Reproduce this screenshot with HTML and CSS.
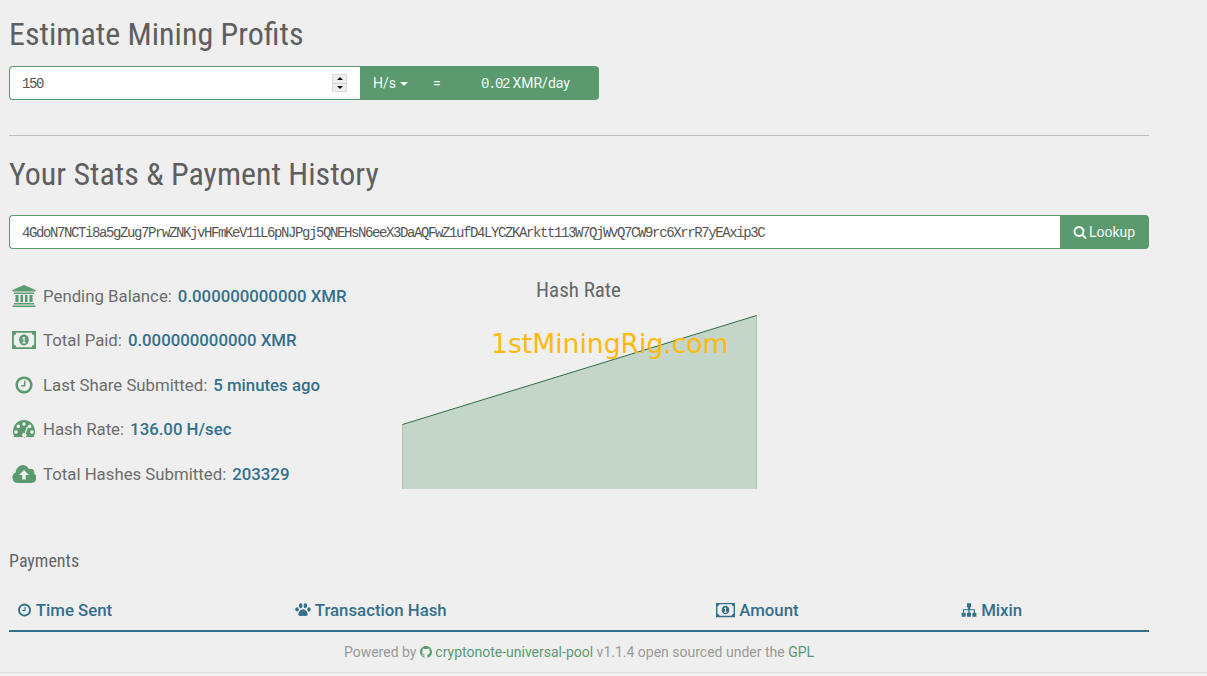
FILE: index.html
```html
<!DOCTYPE html>
<html lang="en">
<head>
<meta charset="utf-8">
<title>Estimate Mining Profits</title>
<link rel="stylesheet" href="styles.css">
</head>
<body>
<svg class="defs" width="0" height="0" aria-hidden="true">
  <symbol id="i-clock" viewBox="0 0 1792 1792"><path d="M1024 544v448q0 14-9 23t-23 9h-320q-14 0-23-9t-9-23v-64q0-14 9-23t23-9h224v-352q0-14 9-23t23-9h64q14 0 23 9t9 23zm416 352q0-148-73-273t-198-198-273-73-273 73-198 198-73 273 73 273 198 198 273 73 273-73 198-198 73-273zm224 0q0 209-103 385.5t-279.5 279.5-385.5 103-385.5-103-279.5-279.5-103-385.5 103-385.5 279.5-279.5 385.5-103 385.5 103 279.5 279.5 103 385.5z"/></symbol>
  <symbol id="i-money" viewBox="0 0 24 18"><path fill-rule="evenodd" d="M0 0h24v18H0zM1.800 4.200v9.600a3 3 0 0 1 2.600 2.400h15.200a3 3 0 0 1 2.600-2.400V4.200a3 3 0 0 1-2.600-2.400H4.400a3 3 0 0 1-2.600 2.400zM12 3.600c2.700 0 4.800 2.400 4.800 5.400s-2.100 5.400-4.800 5.400-4.800-2.400-4.800-5.400 2.100-5.400 4.800-5.400zM10.200 12.400h3.600v-1.200h-1.100V5.800h-1.100l-1.500 1.300.7.9.6-.5v3.700h-1.200z"/></symbol>
</svg>

<main class="page">
  <h2 class="title title-first">Estimate Mining Profits</h2>
  <div class="calc">
    <input class="field mono" type="number" value="150" aria-label="Hash rate">
    <span class="spin" aria-hidden="true"><i class="spin-up"></i><i class="spin-down"></i></span>
    <div class="addon calc-addon">
      <span class="unit">H/s <i class="caret"></i></span>
      <span class="equals">=</span>
      <span class="result"><span class="mono">0.02</span> XMR/day</span>
    </div>
  </div>

  <hr class="rule">

  <h2 class="title title-second">Your Stats &amp; Payment History</h2>
  <div class="lookup">
    <input class="field mono" type="text" value="4GdoN7NCTi8a5gZug7PrwZNKjvHFmKeV11L6pNJPgj5QNEHsN6eeX3DaAQFwZ1ufD4LYCZKArktt113W7QjWvQ7CW9rc6XrrR7yEAxip3C" aria-label="Address">
    <button class="addon lookup-btn" type="button">
      <svg class="btn-icon" viewBox="0 0 1792 1792"><path d="M1216 832q0-185-131.500-316.500t-316.500-131.500-316.500 131.500-131.500 316.500 131.500 316.500 316.500 131.500 316.500-131.500 131.500-316.500zm512 832q0 52-38 90t-90 38q-54 0-90-38l-343-342q-179 124-399 124-143 0-273.500-55.500t-225-150-150-225-55.500-273.500 55.500-273.500 150-225 225-150 273.500-55.500 273.500 55.500 225 150 150 225 55.500 273.500q0 220-124 399l343 343q37 37 37 90z"/></svg>
      Lookup
    </button>
  </div>

  <section class="stats-row">
    <ul class="stats">
      <li class="stat">
        <svg class="stat-icon" viewBox="0 0 24 24"><path d="M12 1 23.500 6v1.500H.5V6zM2 8.500h20V10H2zM3.500 11h3v7h-3zM8.500 11h2.500v7H8.500zM13 11h2.500v7H13zM17.500 11h3v7h-3zM2 19h20v1.500H2zM.5 21.500h23V23H.5z"/></svg>
        <span class="label">Pending Balance:</span><strong class="value">0.000000000000 XMR</strong>
      </li>
      <li class="stat">
        <svg class="stat-icon"><use href="#i-money"/></svg>
        <span class="label">Total Paid:</span><strong class="value">0.000000000000 XMR</strong>
      </li>
      <li class="stat">
        <svg class="stat-icon stat-icon-small"><use href="#i-clock"/></svg>
        <span class="label">Last Share Submitted:</span><strong class="value">5 minutes ago</strong>
      </li>
      <li class="stat">
        <svg class="stat-icon" viewBox="0 0 24 24"><path fill-rule="evenodd" d="M12 3C5.400 3 1 8.400 1 14.500c0 2 .5 3.800 1.300 5.500h19.400c.8-1.700 1.300-3.500 1.300-5.500C23 8.400 18.600 3 12 3zM12 5.200a1.800 1.800 0 1 1 0 3.600 1.800 1.800 0 0 1 0-3.600zM6.300 7.600a1.800 1.800 0 1 1 0 3.600 1.800 1.800 0 0 1 0-3.600zM17.700 7.600a1.800 1.800 0 1 1 0 3.600 1.800 1.800 0 0 1 0-3.600zM4 13.300a1.800 1.800 0 1 1 0 3.600 1.800 1.800 0 0 1 0-3.600zM20 13.300a1.800 1.800 0 1 1 0 3.600 1.800 1.800 0 0 1 0-3.600zM15 9.500l1.200.4-2.500 6.300a2.300 2.300 0 1 1-3.500.9c.5-.8 1.500-1.300 2.300-1.100z"/></svg>
        <span class="label">Hash Rate:</span><strong class="value">136.00 H/sec</strong>
      </li>
      <li class="stat">
        <svg class="stat-icon" viewBox="0 0 24 24"><path fill-rule="evenodd" d="M6 21a5.500 5.500 0 0 1-2.300-10.500A7.500 7.500 0 0 1 10.500 3c3 0 5.400 1.700 6.500 4.200.7-.3 1.200-.4 1.800-.4 2 0 3.500 1.600 3.500 3.500 0 .5-.1 1-.3 1.400A5 5 0 0 1 19 21zM12 8l-5 5h3.200v4.500h3.600V13H17z"/></svg>
        <span class="label">Total Hashes Submitted:</span><strong class="value">203329</strong>
      </li>
    </ul>
    <figure class="chart">
      <figcaption class="chart-title">Hash Rate</figcaption>
      <svg class="chart-svg" viewBox="0 0 355 174" preserveAspectRatio="none">
        <path class="chart-area" d="M0.500 109.500 354.500 .5V174H0.500z"/>
        <path class="chart-edge" d="M0.500 109.500V174M354.500 .5V174"/>
        <path class="chart-line" d="M0.500 109.500 354.500 .5"/>
      </svg>
      <div class="watermark">1stMiningRig.com</div>
    </figure>
  </section>

  <h4 class="payments-title">Payments</h4>
  <table class="payments">
    <colgroup><col class="c1"><col class="c2"><col class="c3"><col class="c4"></colgroup>
    <thead>
      <tr>
        <th><svg class="th-icon th-icon-clock"><use href="#i-clock"/></svg> Time Sent</th>
        <th><svg class="th-icon" viewBox="0 0 24 24"><ellipse cx="8.500" cy="5.500" rx="2.700" ry="3.700"/><ellipse cx="15.500" cy="5.500" rx="2.700" ry="3.700"/><ellipse cx="3" cy="11" rx="2.500" ry="3.300"/><ellipse cx="21" cy="11" rx="2.500" ry="3.300"/><path d="M12 11c3.500 0 7 4.500 7 7.500 0 3-3 2.500-7 2-4 .5-7 1-7-2C5 15.500 8.500 11 12 11z"/></svg> Transaction Hash</th>
        <th><svg class="th-icon th-icon-wide"><use href="#i-money"/></svg> Amount</th>
        <th><svg class="th-icon" viewBox="0 0 24 24"><path d="M9 2h6v6h-1.200v3H20a1 1 0 0 1 1 1v4h2v6h-6v-6h2.500v-3.500h-6.500V16h2v6H9v-6h2v-3.500H4.500V16H7v6H1v-6h2v-4a1 1 0 0 1 1-1h6.200V8H9z"/></svg> Mixin</th>
      </tr>
    </thead>
  </table>

  <footer class="footer">
    Powered by
    <a class="link" href="#"><svg class="gh" viewBox="0 0 16 16"><path d="M8 0C3.580 0 0 3.580 0 8c0 3.540 2.290 6.530 5.470 7.590.4.070.55-.17.55-.38 0-.19-.01-.82-.01-1.490-2.010.37-2.530-.49-2.690-.94-.09-.23-.48-.94-.82-1.130-.28-.15-.68-.52-.01-.53.63-.01 1.080.58 1.230.82.720 1.210 1.870.87 2.330.66.070-.52.280-.87.510-1.070-1.780-.2-3.640-.89-3.640-3.950 0-.87.310-1.590.820-2.150-.08-.2-.36-1.020.08-2.120 0 0 .67-.21 2.200.82.640-.18 1.320-.27 2-.27s1.360.09 2 .27c1.530-1.040 2.200-.82 2.200-.82.440 1.100.160 1.920.080 2.120.510.560.820 1.270.820 2.150 0 3.070-1.870 3.750-3.650 3.950.29.25.54.730.54 1.480 0 1.070-.01 1.930-.01 2.200 0 .21.150.460.550.380A8.010 8.010 0 0 0 16 8c0-4.420-3.580-8-8-8z"/></svg> cryptonote-universal-pool</a>
    v1.1.4 open sourced under the
    <a class="link" href="#">GPL</a>
  </footer>
</main>
</body>
</html>
```

FILE: styles.css
```css
* { box-sizing: border-box; }
html, body { margin: 0; padding: 0; height: 100%; }
body {
  background: #efefef;
  color: #666;
  font-family: Roboto, "Liberation Sans", sans-serif;
  font-size: 16px;
  overflow: hidden;
}
.defs { position: absolute; }
.page {
  width: 100%;
  height: 673px;
  padding: 0 58px 0 9px;
  border-bottom: 1px solid #dcdcdc;
}
.title {
  margin: 0;
  font-family: Roboto, "Liberation Sans Narrow", sans-serif;
  font-stretch: 75%;
  font-weight: 400;
  font-size: 32px;
  line-height: 40px;
  color: #5f5f5f;
}
.title-first { padding-top: 14px; }
.title-second { padding-top: 18px; }
.mono {
  font-family: "Liberation Mono", monospace;
  font-size: 14px;
  letter-spacing: -1.4px;
}
.calc, .lookup { display: flex; height: 34px; }
.calc { position: relative; width: 590px; margin-top: 12px; }
.lookup { margin-top: 21px; }
.field {
  flex: 1;
  min-width: 0;
  height: 34px;
  padding: 2px 12px 0;
  border: 1px solid #5b9a6e;
  border-right: 0;
  border-radius: 4px 0 0 4px;
  background: #fff;
  color: #555;
  outline: 0;
}
.field::-webkit-inner-spin-button { -webkit-appearance: none; appearance: none; }
.spin {
  position: absolute;
  left: 323px;
  top: 8px;
  display: flex;
  flex-direction: column;
  gap: 1px;
  width: 15px;
  height: 18px;
  background: #d6d6d6;
  border: 1px solid #dcdcdc;
}
.spin-up, .spin-down {
  flex: 1;
  display: flex;
  align-items: center;
  justify-content: center;
  background: #eeeeee;
}
.spin-up::before, .spin-down::before {
  content: "";
  border-left: 3.500px solid transparent;
  border-right: 3.500px solid transparent;
}
.spin-up::before { border-bottom: 3px solid #111; }
.spin-down::before { border-top: 3px solid #111; }
.addon {
  display: flex;
  align-items: center;
  background: #5b9a6e;
  color: #f3f9f5;
  border: 0;
  border-radius: 0 4px 4px 0;
  font-family: Roboto, sans-serif;
  font-size: 14px;
}
.calc-addon { width: 239px; padding-left: 13px; }
.unit { width: 60px; }
.caret {
  display: inline-block;
  width: 0; height: 0;
  margin-left: 1px;
  vertical-align: middle;
  border-top: 4px solid #f3f9f5;
  border-left: 4px solid transparent;
  border-right: 4px solid transparent;
}
.equals { width: 48px; }
.result { white-space: nowrap; }
.rule { margin: 35px 0 0; border: 0; border-top: 1px solid #bdbdbd; }
.lookup-btn { width: 89px; justify-content: center; gap: 2px; padding: 0 1px 0 0; }
.btn-icon { width: 14px; height: 14px; fill: currentColor; }
.stats-row { display: flex; margin-top: 18px; }
.stats { list-style: none; margin: 0; padding: 6.250px 0 0; width: 393px; font-size: 16.800px; }
.stat { display: flex; align-items: center; height: 44.500px; white-space: nowrap; }
.stat-icon { width: 24px; height: 24px; margin: 0 7px 0 3px; fill: #5b9a6e; flex: none; }
.stat-icon-small { padding: 2px; }
.label { color: #6c6c6c; margin-right: 6px; }
.value { color: #34708c; font-weight: 500; }
.chart { position: relative; margin: 0; width: 355px; }
.chart-title {
  text-align: center;
  font-stretch: 75%;
  font-size: 21px;
  line-height: 24px;
  color: #666;
  margin-top: 11px;
  height: 37px;
  padding-right: 2px;
}
.chart-svg { display: block; width: 355px; height: 174px; overflow: visible; }
.chart-area { fill: #c4d5c9; }
.chart-edge { fill: none; stroke: #a8c6b0; stroke-width: 1; }
.chart-line { fill: none; stroke: #2e6e3e; stroke-width: 1; }
.watermark {
  position: absolute;
  left: 89px;
  top: 60px;
  font-family: "DejaVu Sans", sans-serif;
  font-size: 26.600px;
  line-height: 34px;
  color: #ffb90f;
  white-space: nowrap;
}
.payments-title {
  margin: 53.500px 0 0;
  font-stretch: 75%;
  font-weight: 400;
  font-size: 18px;
  line-height: 24px;
  color: #666;
}
.payments { width: 100%; table-layout: fixed; border-collapse: collapse; margin-top: 17px; }
.c1 { width: 278px; }
.c2 { width: 421px; }
.c3 { width: 245px; }
.payments th {
  padding: 8px;
  text-align: left;
  height: 41px;
  border-bottom: 2px solid #34708c;
  color: #34708c;
  font-size: 16.800px;
  font-weight: 500;
}
.th-icon { display: inline-block; width: 16px; height: 16px; vertical-align: -2px; fill: currentColor; }
.th-icon-clock { width: 15px; }
.th-icon-wide { width: 19px; }
.footer { text-align: center; font-size: 14px; line-height: 20px; color: #999; margin-top: 10px; }
.link { color: #5b9a6e; text-decoration: none; }
.gh { display: inline-block; width: 12px; height: 12px; vertical-align: -1px; fill: currentColor; }
```
